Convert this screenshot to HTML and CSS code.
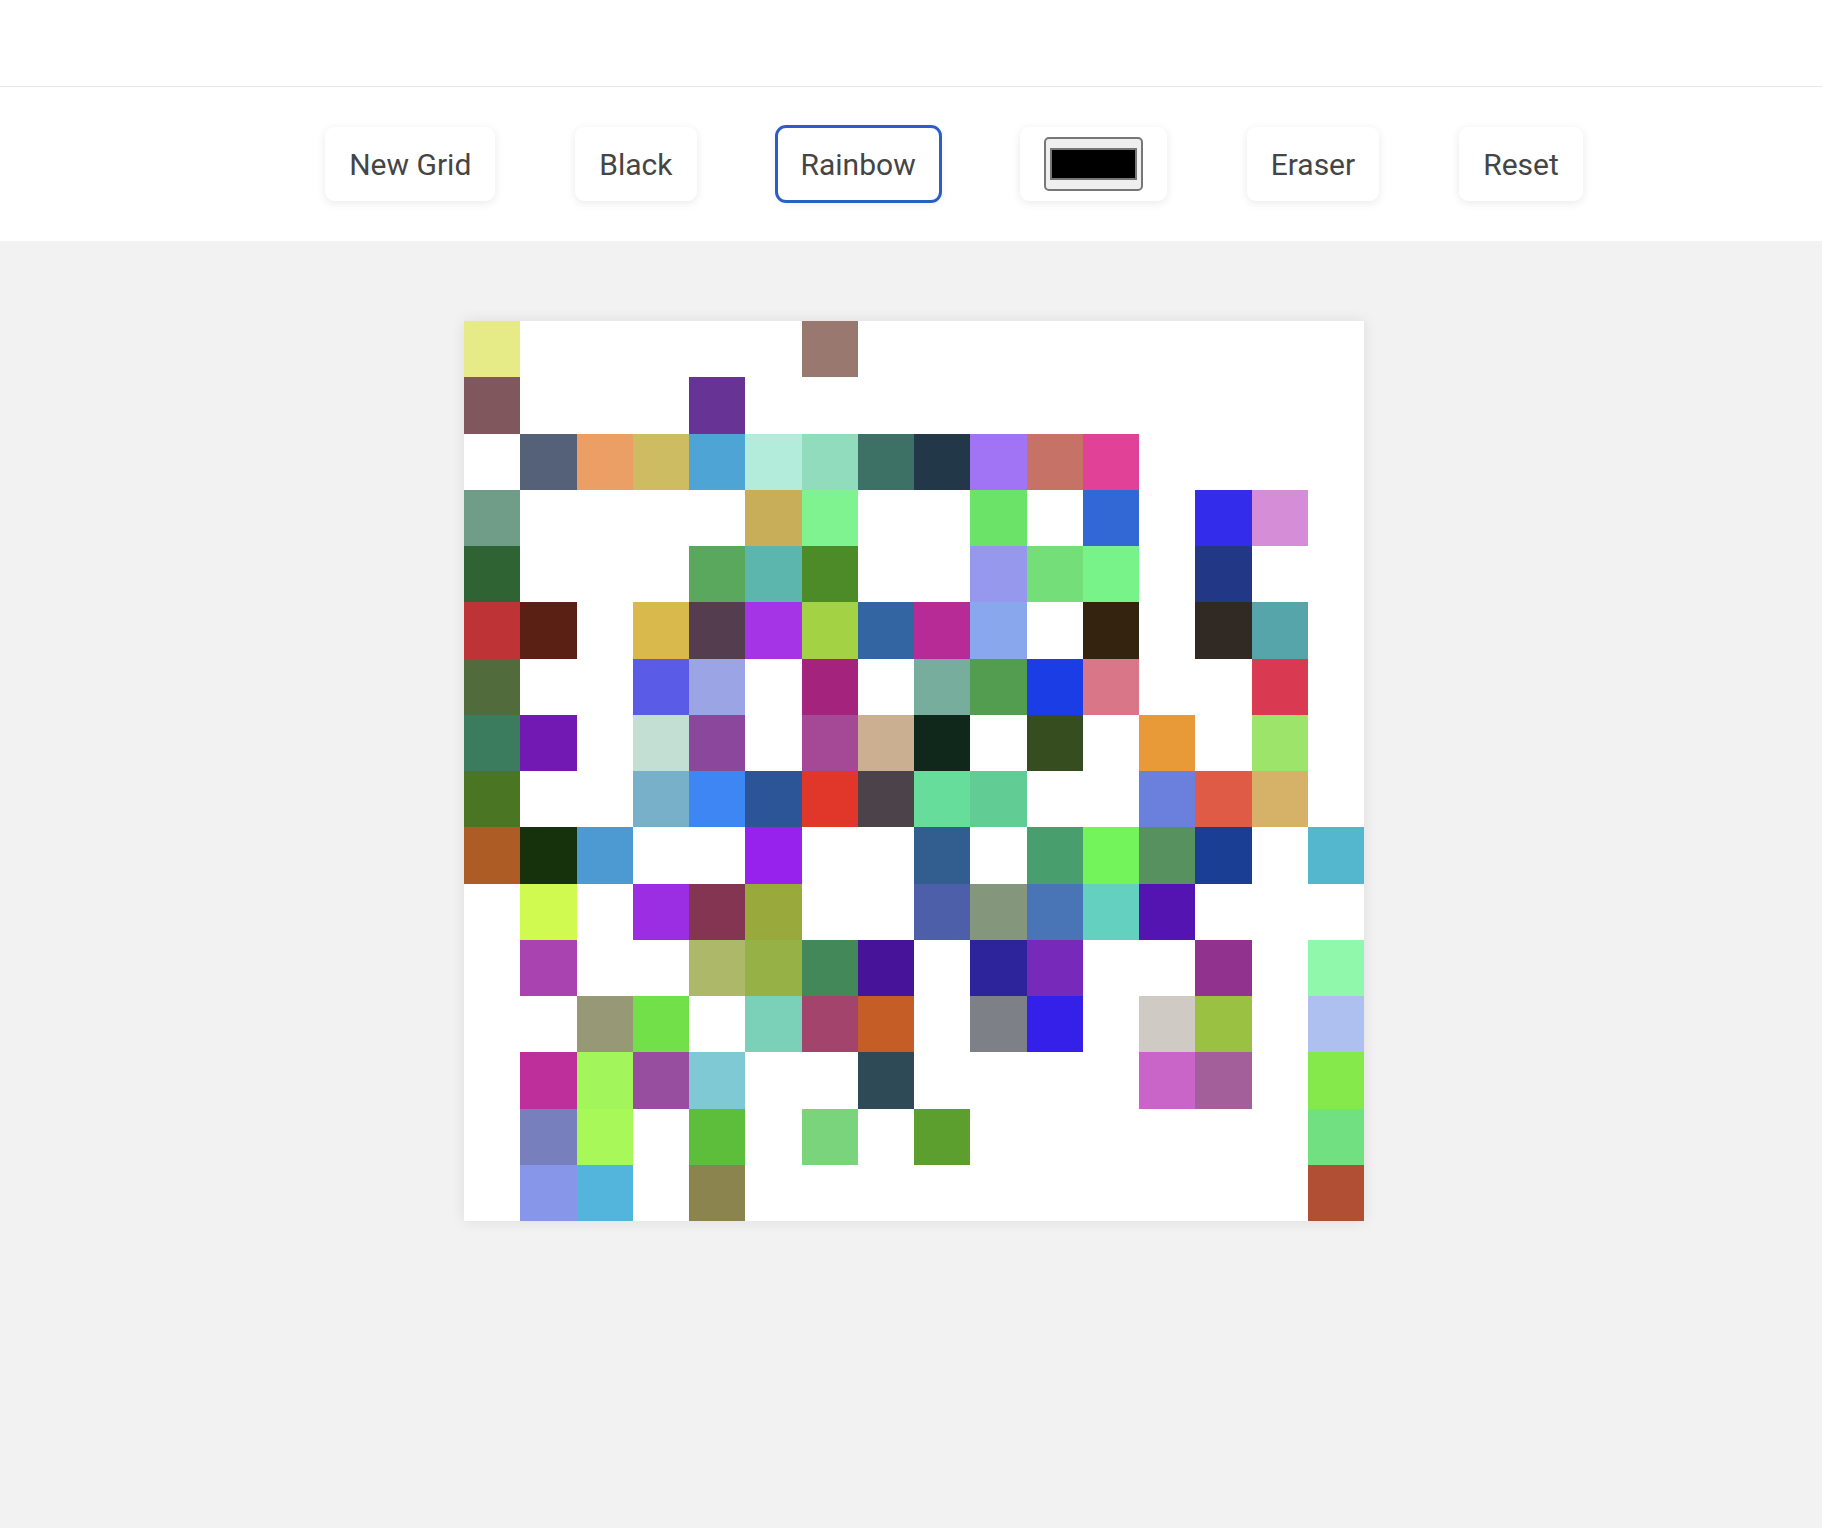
FILE: index.html
```html
<!DOCTYPE html>
<html>
<head>
<meta charset="utf-8">
<title>Etch</title>
<link rel="stylesheet" href="styles.css">
</head>
<body>
<header class="topbar"></header>
<nav class="toolbar">
  <button class="btn">New Grid</button>
  <button class="btn">Black</button>
  <button class="btn active">Rainbow</button>
  <div class="btn picker"><span class="swatch"><span class="swatch-fill"></span></span></div>
  <button class="btn">Eraser</button>
  <button class="btn">Reset</button>
</nav>
<main class="stage">
  <div class="grid" id="grid"></div>
</main>
<script src="script.js"></script>
</body>
</html>
```
FILE: styles.css
```css
* { box-sizing: border-box; }
html, body { margin: 0; padding: 0; }
body {
  background: #f2f2f2;
  font-family: Roboto, "Liberation Sans", sans-serif;
  min-height: 1528px;
}
.topbar {
  height: 87px;
  background: #fff;
  border-bottom: 1px solid #e6e6e6;
}
.toolbar {
  background: #fff;
  height: 154px;
  display: flex;
  justify-content: center;
  align-items: center;
  gap: 80px;
  padding-left: 86px;
}
.btn {
  height: 74px;
  padding: 0 24px;
  border: none;
  border-radius: 9px;
  background: #fff;
  box-shadow: 0 2px 10px rgba(0,0,0,0.09);
  font-family: Roboto, "Liberation Sans", sans-serif;
  font-size: 30px;
  color: #454545;
  display: flex;
  align-items: center;
}
.btn.active {
  outline: 3px solid #2b5fc8;
  outline-offset: -1px;
}
.picker { padding: 0 24px; }
.swatch {
  width: 99px;
  height: 54px;
  border: 2px solid #777;
  border-radius: 5px;
  background: #efefef;
  padding: 9px 4px;
  display: flex;
}
.swatch-fill {
  flex: 1;
  background: #000;
  border: 2px solid #777;
}
.stage {
  display: flex;
  justify-content: center;
  padding-top: 80px;
  padding-left: 6px;
}
.grid {
  width: 900px;
  height: 900px;
  background: #fff;
  display: grid;
  grid-template-columns: repeat(16, 1fr);
  grid-template-rows: repeat(16, 1fr);
  box-shadow: 0 0 14px rgba(0,0,0,0.09);
}
.cell { background: #fff; }
```
FILE: script.js
```js
var W = null;
var rows = [
  ["#e6ea87",W,W,W,W,W,"#997870",W,W,W,W,W,W,W,W,W],
  ["#80575c",W,W,W,"#673496",W,W,W,W,W,W,W,W,W,W,W],
  [W,"#556079","#eb9f65","#cdbc61","#4ea4d4","#b4ecdb","#90dcbd","#3e7166","#223848","#a173f5","#c77266","#e14196",W,W,W,W],
  ["#709d88",W,W,W,W,"#c9ae59","#7ef390",W,W,"#6be268",W,"#3268d5",W,"#332deb","#d48dd6",W],
  ["#2f6333",W,W,W,"#5aa85d","#5cb6ae","#4d8b28",W,W,"#9598ec","#74df79","#77f38a",W,"#223785",W,W],
  ["#bd3336","#5b2014",W,"#d9b94b","#553d50","#a434e5","#a3d345","#3265a1","#b72b96","#88a7ec",W,"#33230f",W,"#312a24","#55a5aa",W],
  ["#526b3c",W,W,"#5a5be6","#9ba4e5",W,"#a3237d",W,"#76ad9c","#539d50","#1b3de6","#d97789",W,W,"#d93951",W],
  ["#3c7c5e","#7219b3",W,"#c3ded2","#8b479b",W,"#a54896","#cbaf91","#10281c",W,"#364e1f",W,"#e89938",W,"#9ce46a",W],
  ["#4a7522",W,W,"#78b0c9","#3d86f3","#2c5597","#e0372a","#4c4249","#67dd9b","#62cc95",W,W,"#6a80dc","#e05b45","#d5b267",W],
  ["#ad5c26","#15320c","#4d9ad2",W,W,"#9722ee",W,W,"#315d8f",W,"#489e6d","#72f45a","#589160","#1b3e95",W,"#54b7ce"],
  [W,"#d0fa50",W,"#9b2de3","#833552","#9aa93b",W,W,"#4d5fa8","#84967b","#4975b7","#64d0bf","#5414b1",W,W,W],
  [W,"#a943b0",W,W,"#adb968","#96b146","#438858","#461399",W,"#2d239a","#7729b9",W,W,"#92328f",W,"#8ff8aa"],
  [W,W,"#979875","#72e049",W,"#7bd0b8","#a3446d","#c55d26",W,"#7e8087","#3520ea",W,"#cfcbc4","#9bc142",W,"#adc0f0"],
  [W,"#bf2f9c","#a2f55a","#984e9f","#7ec9d3",W,W,"#2e4a56",W,W,W,W,"#c964c8","#a25f9a",W,"#86e94b"],
  [W,"#777fbd","#a8f85a",W,"#5dbe3c",W,"#7ad47c",W,"#5c9f2e",W,W,W,W,W,W,"#70e080"],
  [W,"#8796e8","#53b5dc",W,"#8b844f",W,W,W,W,W,W,W,W,W,W,"#b04f34"]
];
var grid = document.getElementById("grid");
rows.forEach(function (r) {
  r.forEach(function (c) {
    var d = document.createElement("div");
    d.className = "cell";
    if (c) d.style.background = c;
    grid.appendChild(d);
  });
});
```
